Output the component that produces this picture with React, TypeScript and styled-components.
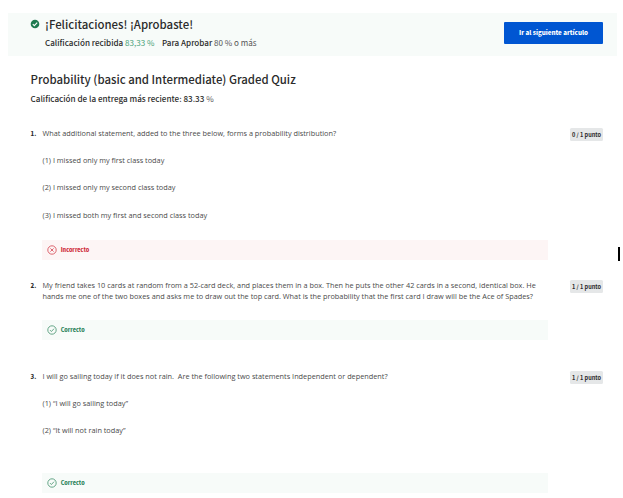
import React from 'react';
import styled, { createGlobalStyle } from 'styled-components';

const GlobalStyle = createGlobalStyle`
  *, *::before, *::after { box-sizing: border-box; }
  body { margin: 0; background: #fff; }
  h1, h2, p { margin: 0; font-weight: inherit; }
`;

const heading = '"Noto Sans CJK SC", "Noto Sans", sans-serif';
const body = '"Open Sans", "Noto Sans", sans-serif';

const Page = styled.main`
  position: relative;
  width: 623px;
  height: 498px;
  padding-top: 12.5px;
  overflow: hidden;
  font-family: ${heading};
  color: #2b2b2b;
  background: #fff;
`;

const Banner = styled.header`
  display: flex;
  justify-content: space-between;
  align-items: flex-start;
  height: 43.5px;
  margin: 0 6px 0 8px;
  padding: 0 14px 0 22px;
  background: #f7fbf9;
`;

const Result = styled.div`
  display: flex;
  gap: 5px;
  padding-top: 3px;
`;

const PassedMark = styled.svg`
  width: 10px;
  height: 10px;
  margin-top: 3.8px;
`;

const Title = styled.h1`
  font-size: 11.4px;
  line-height: 16px;
  font-weight: 500;
  white-space: nowrap;
`;

const Scores = styled.div`
  display: flex;
  gap: 7.5px;
  margin-top: 5px;
  font-size: 8.08px;
  line-height: 12px;
  white-space: nowrap;
`;

const Score = styled.span`
  font-weight: 500;
`;

const Value = styled.span<{ $color: string }>`
  font-weight: 400;
  color: ${({ $color }) => $color};
`;

const NextButton = styled.button`
  width: 99px;
  height: 22px;
  margin-top: 9px;
  padding: 0;
  border: 0;
  border-radius: 1px;
  background: #0056d2;
  color: #fff;
  font: 900 6.2px/22px ${heading};
`;

const QuizHeader = styled.section`
  height: 69px;
  padding: 15px 0 0 30.5px;
`;

const QuizTitle = styled.h2`
  font-size: 11.4px;
  line-height: 16px;
  font-weight: 500;
`;

const LatestGrade = styled.p`
  margin-top: 6px;
  font-size: 8.12px;
  line-height: 12px;
  font-weight: 500;
`;

const Question = styled.section<{ $height: number }>`
  display: grid;
  grid-template-columns: 12px 506px 55px;
  justify-content: start;
  height: ${({ $height }) => $height}px;
  padding-left: 30px;
`;

const Index = styled.span`
  padding: 1px 0 0 0.5px;
  font: 900 6px/16px ${heading};
`;

const Content = styled.div`
  display: flex;
  flex-direction: column;
  padding-top: 2.5px;
`;

const Paragraph = styled.p`
  margin-bottom: 16.4px;
  padding-left: 0.5px;
  font: 400 7.32px/11px ${body};
  color: #4a4a4a;
  white-space: pre;
`;

const Feedback = styled.div<{ $correct: boolean; $gap: number }>`
  display: flex;
  align-items: center;
  gap: 3.3px;
  height: 20px;
  flex: none;
  margin-top: ${({ $gap }) => $gap}px;
  padding-left: 5.4px;
  background: ${({ $correct }) => ($correct ? '#f7fbf9' : '#fdf5f5')};
  color: ${({ $correct }) => ($correct ? '#2a8259' : '#cf2a38')};
  font: 900 5.45px/20px ${heading};
`;

const StatusIcon = styled.svg`
  width: 10px;
  height: 10px;
  fill: none;
  stroke: currentColor;
  stroke-width: 0.7;
`;

const Points = styled.span`
  width: 33px;
  height: 13px;
  margin: 3px 0 0 22px;
  padding-top: 1px;
  border-radius: 1.5px;
  background: #e5e7e8;
  font: 700 5.58px/13px ${heading};
  text-align: center;
  white-space: nowrap;
`;

const Caret = styled.div`
  position: absolute;
  left: 618px;
  top: 247px;
  width: 2px;
  height: 14px;
  background: #000;
`;

type Item = {
  lines: string[];
  correct: boolean;
  points: string;
  height: number;
  gap: number;
};

const items: Item[] = [
  {
    lines: [
      'What additional statement, added to the three below, forms a probability distribution?',
      '(1) I missed only my first class today',
      '(2) I missed only my second class today',
      '(3) I missed both my first and second class today',
    ],
    correct: false,
    points: '0 / 1 punto',
    height: 152,
    gap: 2.9,
  },
  {
    lines: [
      'My friend takes 10 cards at random from a 52-card deck, and places them in a box. Then he puts the other 42 cards in a second, identical box. He\nhands me one of the two boxes and asks me to draw out the top card. What is the probability that the first card I draw will be the Ace of Spades?',
    ],
    correct: true,
    points: '1 / 1 punto',
    height: 91,
    gap: 2.1,
  },
  {
    lines: [
      'I will go sailing today if it does not rain.  Are the following two statements Independent or dependent?',
      '(1) “I will go sailing today”',
      '(2) “It will not rain today”',
    ],
    correct: true,
    points: '1 / 1 punto',
    height: 130,
    gap: 20.3,
  },
];

export default function App() {
  return (
    <Page>
      <GlobalStyle />
      <Banner>
        <Result>
          <PassedMark viewBox="0 0 10 10">
            <circle cx="5" cy="5" r="4.3" fill="#1f7a50" />
            <path d="M2.8 5.1 4.3 6.6 7.2 3.6" fill="none" stroke="#fff" strokeWidth="1.1" />
          </PassedMark>
          <div>
            <Title>¡Felicitaciones! ¡Aprobaste!</Title>
            <Scores>
              <Score>
                Calificación recibida <Value $color="#48a078">83,33 %</Value>
              </Score>
              <Score>
                Para Aprobar <Value $color="#555">80 % o más</Value>
              </Score>
            </Scores>
          </div>
        </Result>
        <NextButton>Ir al siguiente artículo</NextButton>
      </Banner>
      <QuizHeader>
        <QuizTitle>Probability (basic and Intermediate) Graded Quiz</QuizTitle>
        <LatestGrade>
          Calificación de la entrega más reciente: 83.33 <Value $color="#555">%</Value>
        </LatestGrade>
      </QuizHeader>
      {items.map((item, i) => (
        <Question key={i} $height={item.height}>
          <Index>{i + 1}.</Index>
          <Content>
            {item.lines.map((line) => (
              <Paragraph key={line}>{line}</Paragraph>
            ))}
            <Feedback $correct={item.correct} $gap={item.gap}>
              <StatusIcon viewBox="0 0 10 10">
                <circle cx="5" cy="5" r="4.2" />
                <path d={item.correct ? 'M3 5.1 4.4 6.5 7 3.7' : 'M3.4 3.4 6.6 6.6M6.6 3.4 3.4 6.6'} />
              </StatusIcon>
              {item.correct ? 'Correcto' : 'Incorrecto'}
            </Feedback>
          </Content>
          <Points>{item.points}</Points>
        </Question>
      ))}
      <Caret />
    </Page>
  );
}
